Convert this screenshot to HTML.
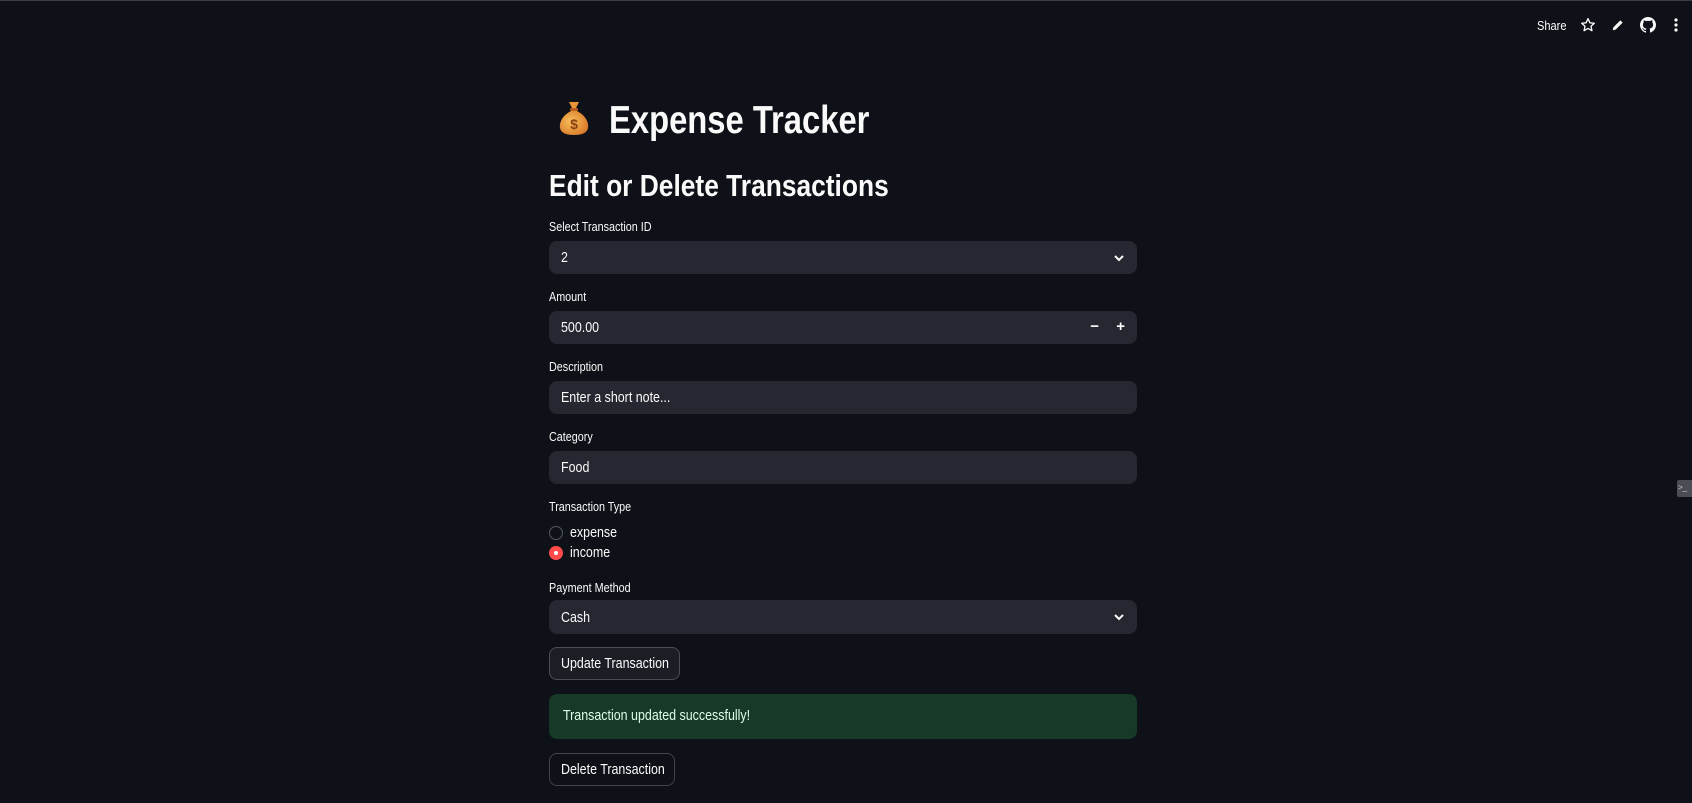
<!DOCTYPE html>
<html><head><meta charset="utf-8"><style>
*{box-sizing:border-box;margin:0;padding:0}
html,body{width:1692px;height:803px;overflow:hidden;background:#0e1117;color:#fafafa;font-family:"Liberation Sans",sans-serif}
.a{position:absolute}
.n{display:inline-block;transform:scaleX(.83);transform-origin:0 50%;white-space:nowrap}
.lbl{position:absolute;left:549px;font-size:13px;color:#fafafa}
.box{position:absolute;left:549px;width:588px;background:#262730;border-radius:8px;font-size:15px;padding-left:12px;display:flex;align-items:center}
.btn{position:absolute;left:549px;border:1px solid rgba(250,250,250,.22);border-radius:8px;font-size:15px;display:flex;align-items:center;padding-left:11px}
.chev{position:absolute;right:12px;top:50%;margin-top:-5px}
</style></head><body>
<div class="a" style="left:0;top:0;width:1692px;height:1px;background:#3a3d45"></div>
<div class="a" style="left:1537px;top:18px;font-size:13px"><span class="n" style="transform:scaleX(.85)">Share</span></div>
<svg class="a" style="left:1580px;top:17px" width="16" height="16" viewBox="0 0 24 24"><path d="M12 2.5l2.9 6.2 6.6.7-5 4.5 1.4 6.6L12 17.2l-5.9 3.3 1.4-6.6-5-4.5 6.6-.7z" fill="none" stroke="#fafafa" stroke-width="2" stroke-linejoin="round"/></svg>
<svg class="a" style="left:1611px;top:18px" width="14" height="14" viewBox="0 0 24 24"><path d="M3 21l1-5L16 4l4 4L8 20z" fill="#fafafa"/></svg>
<svg class="a" style="left:1640px;top:17px" width="16" height="16" viewBox="0 0 16 16"><path fill="#fafafa" d="M8 0C3.58 0 0 3.58 0 8c0 3.540 2.29 6.53 5.47 7.59.4.07.55-.17.55-.38v-1.33c-2.23.48-2.7-1.07-2.7-1.07-.36-.92-.89-1.170-.89-1.17-.73-.5.06-.49.06-.49.8.06 1.23.83 1.23.83.72 1.23 1.88.87 2.33.66.07-.52.28-.87.51-1.07-1.78-.2-3.64-.89-3.64-3.95 0-.87.31-1.59.82-2.15-.08-.2-.36-1.02.08-2.12 0 0 .67-.21 2.2.82A7.7 7.7 0 018 3.8c.68 0 1.36.09 2 .27 1.53-1.04 2.2-.82 2.2-.82.44 1.1.16 1.92.08 2.12.51.56.82 1.27.82 2.15 0 3.07-1.87 3.75-3.65 3.95.29.25.54.73.54 1.48v2.2c0 .21.15.46.55.38A8 8 0 0016 8c0-4.42-3.58-8-8-8z"/></svg>
<svg class="a" style="left:1672px;top:17px" width="8" height="16" viewBox="0 0 8 16"><circle cx="4" cy="3" r="1.6" fill="#fafafa"/><circle cx="4" cy="8" r="1.6" fill="#fafafa"/><circle cx="4" cy="13" r="1.6" fill="#fafafa"/></svg>
<div class="a" style="left:1677px;top:480px;width:15px;height:17px;background:#4a4d55;border-radius:2px 0 0 2px;font-size:8px;color:#ccc;padding:3px 1px">&gt;_</div>

<svg class="a" style="left:559px;top:100px" width="30" height="36" viewBox="0 0 30 36">
<defs><radialGradient id="g" cx=".4" cy=".45" r=".65"><stop offset="0" stop-color="#f8c05a"/><stop offset="1" stop-color="#d9782a"/></radialGradient></defs>
<path d="M10 2h10l-3 6h-4z" fill="#e9963a"/><rect x="11" y="8" width="8" height="3" rx="1.5" fill="#b85f20"/>
<path d="M12 11C4 15 0 22 1 28c1 5 6 7 14 7s13-2 14-7c1-6-3-13-11-17z" fill="url(#g)"/>
<text x="15" y="29" font-size="14" font-family="Liberation Sans" font-weight="bold" fill="#8a3f14" text-anchor="middle">$</text></svg>
<div class="a" style="left:609px;top:98px;font-size:39px;font-weight:bold;line-height:46px"><span class="n" style="transform:scaleX(.84)">Expense Tracker</span></div>
<div class="a" style="left:549px;top:166px;font-size:31px;font-weight:bold;line-height:40px"><span class="n" style="transform:scaleX(.85)">Edit or Delete Transactions</span></div>

<div class="lbl" style="top:219px"><span class="n">Select Transaction ID</span></div>
<div class="box" style="top:241px;height:33px"><span class="n">2</span><svg class="chev" width="12" height="10" viewBox="0 0 12 10"><path d="M2 3l4 4 4-4" fill="none" stroke="#fafafa" stroke-width="2"/></svg></div>

<div class="lbl" style="top:289px"><span class="n">Amount</span></div>
<div class="box" style="top:311px;height:33px"><span class="n">500.00</span><span class="a" style="right:38px;top:7px;font-weight:bold;font-size:15px">−</span><span class="a" style="right:12px;top:7px;font-weight:bold;font-size:15px">+</span></div>

<div class="lbl" style="top:359px"><span class="n">Description</span></div>
<div class="box" style="top:381px;height:33px"><span class="n">Enter a short note...</span></div>

<div class="lbl" style="top:429px"><span class="n">Category</span></div>
<div class="box" style="top:451px;height:33px"><span class="n">Food</span></div>

<div class="lbl" style="top:499px"><span class="n">Transaction Type</span></div>
<div class="a" style="left:549px;top:526px;width:14px;height:14px;border-radius:50%;border:1px solid #555863;background:#0e1117"></div>
<div class="a" style="left:570px;top:524px;font-size:15px"><span class="n">expense</span></div>
<div class="a" style="left:549px;top:546px;width:14px;height:14px;border-radius:50%;background:#ff4b4b"></div>
<div class="a" style="left:554px;top:551px;width:4px;height:4px;border-radius:50%;background:#fff"></div>
<div class="a" style="left:570px;top:544px;font-size:15px"><span class="n">income</span></div>

<div class="lbl" style="top:580px"><span class="n">Payment Method</span></div>
<div class="box" style="top:600px;height:34px"><span class="n">Cash</span><svg class="chev" width="12" height="10" viewBox="0 0 12 10"><path d="M2 3l4 4 4-4" fill="none" stroke="#fafafa" stroke-width="2"/></svg></div>

<div class="btn" style="top:647px;width:131px;height:33px;background:#1c1e26"><span class="n">Update Transaction</span></div>
<div class="a" style="left:549px;top:694px;width:588px;height:45px;background:#173928;border-radius:8px;color:#dffde9;font-size:15px;padding:13px 0 0 14px"><span class="n">Transaction updated successfully!</span></div>
<div class="btn" style="top:753px;width:126px;height:33px;background:#0e1117"><span class="n">Delete Transaction</span></div>
</body></html>
